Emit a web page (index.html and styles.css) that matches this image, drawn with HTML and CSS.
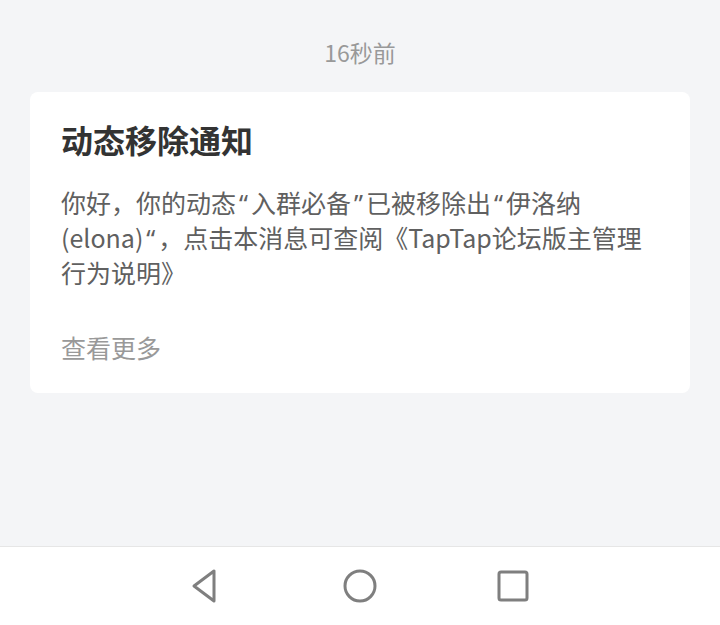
FILE: index.html
```html
<!DOCTYPE html>
<html lang="zh-CN">
<head>
    <meta charset="UTF-8">
    <meta name="viewport" content="width=device-width, initial-scale=1.0">
    <link rel="stylesheet" href="styles.css">
    <title>消息通知</title>
</head>
<body>
    <div class="page">
        <div class="messages">
            <div class="time">16秒前</div>

            <div class="card">
                <div class="card-title">动态移除通知</div>
                <div class="card-text">你好，你的动态<span class="quote">“</span>入群必备<span class="quote">”</span>已被移除出<span class="quote">“</span>伊洛纳(elona)<span class="quote">“</span>，点击本消息可查阅《TapTap论坛版主管理行为说明》</div>
                <div class="card-more">查看更多</div>
            </div>
        </div>

        <div class="navbar">
            <svg class="nav-icon" width="40" height="40" viewBox="0 0 40 40">
                <path d="M27 5 L27 35 L7 20 Z" fill="none" stroke="#7f7f7f" stroke-width="3" stroke-linejoin="round"/>
            </svg>
            <svg class="nav-icon" width="40" height="40" viewBox="0 0 40 40">
                <circle cx="20" cy="20" r="15" fill="none" stroke="#7f7f7f" stroke-width="3"/>
            </svg>
            <svg class="nav-icon" width="40" height="40" viewBox="0 0 40 40">
                <rect x="6" y="6" width="28" height="28" rx="2" fill="none" stroke="#7f7f7f" stroke-width="3"/>
            </svg>
        </div>
    </div>
</body>
</html>
```

FILE: styles.css
```css
body {
    margin: 0;
    background-color: #f4f5f7;
    font-family: "Noto Sans CJK SC", "Noto Sans", sans-serif;
}

.page {
    display: flex;
    flex-direction: column;
    height: 625px;
}

.messages {
    flex: 1;
    padding: 37px 30px 0;
}

.time {
    text-align: center;
    font-size: 23px;
    line-height: 30px;
    color: #999999;
    margin-bottom: 25px;
}

.card {
    background-color: #ffffff;
    border-radius: 8px;
    padding: 27px 30px 29px 31px;
}

.card-title {
    font-size: 32px;
    line-height: 40px;
    font-weight: bold;
    color: #333333;
}

.card-text {
    margin-top: 26px;
    font-size: 25px;
    line-height: 34px;
    color: #606060;
}

/* curly quotes are narrow in the original, not full width */
.quote {
    font-family: "Noto Sans", sans-serif;
    padding: 0 3px;
}

.card-more {
    margin-top: 41px;
    font-size: 25px;
    line-height: 34px;
    color: #999999;
}

.navbar {
    height: 78px;
    border-top: 1px solid #e6e6e6;
    background-color: #ffffff;
    display: flex;
    justify-content: center;
    align-items: center;
    gap: 113px;
}

.nav-icon {
    display: block;
}
```
